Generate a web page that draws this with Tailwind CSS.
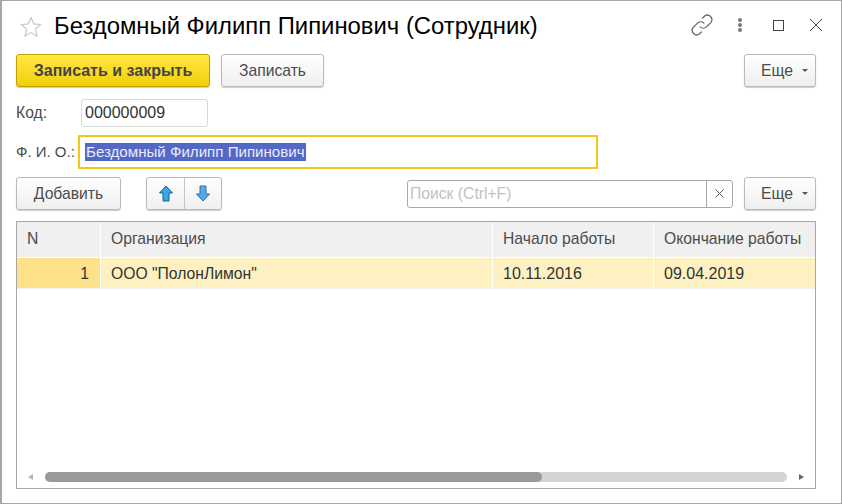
<!DOCTYPE html>
<html lang="ru">
<head>
    <meta charset="UTF-8">
    <title>Бездомный Филипп Пипинович (Сотрудник)</title>
    <script src="https://cdn.jsdelivr.net/npm/@tailwindcss/browser@4"></script>
</head>
<body class="bg-white">
    <div class="w-[842px] h-[504px] border border-l-2 border-[#a6a6a6] bg-white font-['Liberation_Sans',Arial,sans-serif] text-[#4b4b4b] text-[15.7px] overflow-hidden flex flex-col pt-[1px] pl-[14px] pr-[25px]">
        <!-- Title -->
        <div class="h-[52px] pb-[4px] flex items-center shrink-0">
            <svg class="ml-[4px] mt-[1px]" width="22" height="22" viewBox="0 0 22 22"><path d="M11 1.5l2.8 6.4 6.7.7-5 4.6 1.4 6.8L11 16.6l-5.9 3.4 1.4-6.8-5-4.6 6.7-.7z" fill="#fff" stroke="#c8c8c8" stroke-width="1.2"/></svg>
            <h1 class="ml-[12px] text-[23.85px] text-black leading-none whitespace-nowrap">Бездомный Филипп Пипинович (Сотрудник)</h1>
            <div class="ml-auto flex items-center mr-[-6px] mt-[-3px]">
                <svg width="28" height="28" viewBox="0 0 22 22" fill="none" stroke="#666" stroke-width="1" stroke-linecap="round"><path d="M9.5 12.5a3.6 3.6 0 0 0 5 0l3.6-3.6a3.6 3.6 0 0 0-5-5l-1.6 1.6"/><path d="M12.5 9.5a3.6 3.6 0 0 0-5 0l-3.6 3.6a3.6 3.6 0 0 0 5 5l1.6-1.6"/></svg>
                <div class="ml-[22px] flex flex-col gap-[1px] mt-[1px]">
                    <span class="w-[4px] h-[4px] rounded-full bg-[#777]"></span>
                    <span class="w-[4px] h-[4px] rounded-full bg-[#777]"></span>
                    <span class="w-[4px] h-[4px] rounded-full bg-[#777]"></span>
                </div>
                <span class="ml-[31px] w-[11px] h-[11px] border border-[#444] mt-[1px]"></span>
                <svg class="ml-[26px] mt-[1px]" width="12" height="12" viewBox="0 0 12 12" stroke="#444" stroke-width="1"><path d="M0 0l12 12M12 0L0 12"/></svg>
            </div>
        </div>
        <!-- Command bar -->
        <div class="flex items-center h-[33px] shrink-0">
            <button class="w-[194px] h-[33px] rounded-[3px] border border-[#bfa200] bg-gradient-to-b from-[#ffe83d] to-[#f2cf00] font-bold text-[#444] text-[16px] shadow-[0_1px_1px_rgba(0,0,0,0.2)]">Записать и закрыть</button>
            <button class="ml-[11px] w-[103px] h-[33px] rounded-[3px] border border-[#b9b9b9] bg-gradient-to-b from-white to-[#efefef] text-[#4b4b4b] shadow-[0_1px_1px_rgba(0,0,0,0.2)]">Записать</button>
            <button class="ml-auto w-[72px] h-[33px] rounded-[3px] border border-[#b9b9b9] bg-gradient-to-b from-white to-[#efefef] flex items-center pl-[16px] shadow-[0_1px_1px_rgba(0,0,0,0.2)]">Еще<span class="ml-[9px] w-0 h-0 border-x-[3px] border-x-transparent border-t-[3px] border-t-[#555]"></span></button>
        </div>
        <!-- Fields -->
        <div class="flex items-center mt-[12px] h-[28px] shrink-0">
            <label class="w-[65px]">Код:</label>
            <div class="w-[127px] h-[28px] border border-[#d9d9d9] rounded-[3px] pl-[3px] flex items-center text-[#333] text-[16px]">000000009</div>
        </div>
        <div class="flex items-center mt-[8px] h-[34px] shrink-0">
            <label class="w-[62px] whitespace-nowrap text-[15px]">Ф. И. О.:</label>
            <div class="w-[520px] h-[34px] border-2 border-[#f5c518] pl-[5px] flex items-center">
                <span class="bg-[#5468c4] text-[#e8ecff] text-[15.1px] h-[18px] leading-[18px] px-[1px] whitespace-nowrap">Бездомный Филипп Пипинович</span>
            </div>
        </div>
        <!-- Table bar -->
        <div class="flex items-center mt-[8px] h-[33px] shrink-0">
            <button class="w-[105px] h-[33px] rounded-[3px] border border-[#b9b9b9] bg-gradient-to-b from-white to-[#efefef] shadow-[0_1px_1px_rgba(0,0,0,0.2)]">Добавить</button>
            <div class="ml-[25px] w-[76px] h-[33px] rounded-[3px] border border-[#b9b9b9] bg-gradient-to-b from-white to-[#efefef] flex shadow-[0_1px_1px_rgba(0,0,0,0.2)]">
                <div class="w-[38px] border-r border-[#c4c4c4] flex items-center justify-center">
                    <svg width="14" height="17" viewBox="0 0 14 17"><path d="M7 1L13.5 8H10v8H4V8H.5z" fill="#3aa6e6" stroke="#14608f"/></svg>
                </div>
                <div class="flex-1 flex items-center justify-center">
                    <svg width="14" height="17" viewBox="0 0 14 17"><path d="M7 16L13.5 9H10V1H4v8H.5z" fill="#5aa9e6" stroke="#2a6ea8"/></svg>
                </div>
            </div>
            <div class="ml-[185px] w-[326px] h-[28px] border border-[#a8a8a8] rounded-[3px] flex items-center">
                <span class="flex-1 pl-[2px] text-[#c2c2c2]">Поиск (Ctrl+F)</span>
                <span class="w-[26px] h-full border-l border-[#a8a8a8] flex items-center justify-center">
                    <svg width="9" height="9" viewBox="0 0 9 9" stroke="#555" stroke-width="1"><path d="M.5.5l8 8M8.5.5l-8 8"/></svg>
                </span>
            </div>
            <button class="ml-auto w-[72px] h-[33px] rounded-[3px] border border-[#b9b9b9] bg-gradient-to-b from-white to-[#efefef] flex items-center pl-[16px] shadow-[0_1px_1px_rgba(0,0,0,0.2)]">Еще<span class="ml-[9px] w-0 h-0 border-x-[3px] border-x-transparent border-t-[3px] border-t-[#555]"></span></button>
        </div>
        <!-- Table -->
        <div class="mt-[11px] h-[268px] w-[800px] border border-[#a6a6a6] flex flex-col shrink-0">
            <div class="flex h-[36px] bg-[#f0f0f0] border-b border-white">
                <div class="w-[84px] pl-[10px] pb-[2px] flex items-center border-r border-white">N</div>
                <div class="w-[392px] pl-[10px] pb-[2px] flex items-center border-r border-white">Организация</div>
                <div class="w-[161px] pl-[10px] pb-[2px] flex items-center border-r border-white">Начало работы</div>
                <div class="flex-1 pl-[10px] pb-[2px] flex items-center whitespace-nowrap">Окончание работы</div>
            </div>
            <div class="flex h-[31px] bg-[#fdf1c2] border-b border-[#f0f0f0] text-[#333]">
                <div class="w-[84px] pr-[11px] pt-[2px] flex items-center justify-end bg-[#fde28a] border-r border-white">1</div>
                <div class="w-[392px] pl-[10px] pt-[2px] flex items-center border-r border-white">ООО "ПолонЛимон"</div>
                <div class="w-[161px] pl-[10px] pt-[2px] flex items-center border-r border-white text-[16px]">10.11.2016</div>
                <div class="flex-1 pl-[10px] pt-[2px] flex items-center text-[16px]">09.04.2019</div>
            </div>
            <div class="flex-1"></div>
            <!-- Scrollbar -->
            <div class="h-[16px] flex items-start">
                <span class="ml-[11px] mt-[2px] w-0 h-0 border-y-[3px] border-y-transparent border-r-[5px] border-r-[#b4b4b4]"></span>
                <div class="ml-[12px] w-[742px] h-[10px] rounded-full bg-[#d4d4d4]">
                    <div class="w-[497px] h-full rounded-full bg-[#999]"></div>
                </div>
                <span class="ml-[12px] mt-[2px] w-0 h-0 border-y-[3px] border-y-transparent border-l-[5px] border-l-[#666]"></span>
            </div>
        </div>
    </div>
</body>
</html>
